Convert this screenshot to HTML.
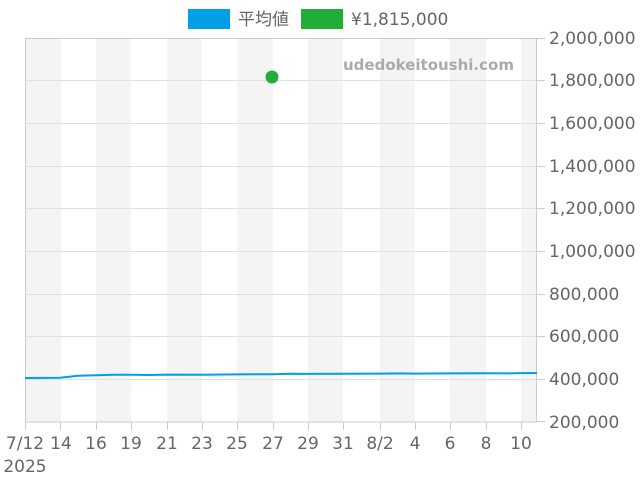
<!DOCTYPE html>
<html><head><meta charset="utf-8"><style>
body{margin:0;background:#fff;width:640px;height:480px;overflow:hidden}
svg text{font-family:"DejaVu Sans","Liberation Sans","Noto Sans CJK JP",sans-serif;fill:#666;font-size:17px}
</style></head><body>
<svg width="640" height="480" viewBox="0 0 640 480">
<rect x="188" y="9" width="42" height="20" fill="#009fe8"/>
<text x="238" y="25" style="font-family:'Noto Sans CJK JP',sans-serif">平均値</text>
<rect x="301" y="9" width="42" height="20" fill="#22ac38"/>
<text x="351" y="25">¥1,815,000</text>
<g fill="#f4f4f4">
<rect x="25" y="38" width="36" height="384"/><rect x="96" y="38" width="35" height="384"/>
<rect x="167" y="38" width="35" height="384"/><rect x="237" y="38" width="36" height="384"/>
<rect x="308" y="38" width="35" height="384"/><rect x="380" y="38" width="35" height="384"/>
<rect x="450" y="38" width="36" height="384"/><rect x="521" y="38" width="16" height="384"/>
</g>
<g stroke="#e0e0e0" stroke-width="1">
<line x1="25" x2="537" y1="80.5" y2="80.5"/><line x1="25" x2="537" y1="123.5" y2="123.5"/>
<line x1="25" x2="537" y1="166.5" y2="166.5"/><line x1="25" x2="537" y1="208.5" y2="208.5"/>
<line x1="25" x2="537" y1="251.5" y2="251.5"/><line x1="25" x2="537" y1="294.5" y2="294.5"/>
<line x1="25" x2="537" y1="336.5" y2="336.5"/><line x1="25" x2="537" y1="379.5" y2="379.5"/>
</g>
<rect x="25.5" y="38.5" width="511" height="383.5" fill="none" stroke="#ccc"/>
<g stroke="#ccc">
<line x1="537" x2="545" y1="38.5" y2="38.5"/><line x1="537" x2="545" y1="80.5" y2="80.5"/>
<line x1="537" x2="545" y1="123.5" y2="123.5"/><line x1="537" x2="545" y1="166.5" y2="166.5"/>
<line x1="537" x2="545" y1="208.5" y2="208.5"/><line x1="537" x2="545" y1="251.5" y2="251.5"/>
<line x1="537" x2="545" y1="294.5" y2="294.5"/><line x1="537" x2="545" y1="336.5" y2="336.5"/>
<line x1="537" x2="545" y1="379.5" y2="379.5"/><line x1="537" x2="545" y1="421.5" y2="421.5"/>
<line x1="25.5" x2="25.5" y1="422" y2="430"/><line x1="60.5" x2="60.5" y1="422" y2="430"/>
<line x1="96.5" x2="96.5" y1="422" y2="430"/><line x1="131.5" x2="131.5" y1="422" y2="430"/>
<line x1="167.5" x2="167.5" y1="422" y2="430"/><line x1="202.5" x2="202.5" y1="422" y2="430"/>
<line x1="237.5" x2="237.5" y1="422" y2="430"/><line x1="273.5" x2="273.5" y1="422" y2="430"/>
<line x1="308.5" x2="308.5" y1="422" y2="430"/><line x1="343.5" x2="343.5" y1="422" y2="430"/>
<line x1="380.5" x2="380.5" y1="422" y2="430"/><line x1="415.5" x2="415.5" y1="422" y2="430"/>
<line x1="450.5" x2="450.5" y1="422" y2="430"/><line x1="486.5" x2="486.5" y1="422" y2="430"/>
<line x1="521.5" x2="521.5" y1="422" y2="430"/>
</g>
<text x="343" y="70" style="font-weight:bold;fill:#aaa;font-size:15px">udedokeitoushi.com</text>
<polyline fill="none" stroke="#009fe8" stroke-width="2" points="25,378 60,377.7 78,375.7 96,375.3 114,374.7 131,374.7 150,375 167,374.6 202,374.7 237,374.4 273,374.2 290,373.8 308,373.9 343,373.7 380,373.6 400,373.4 415,373.6 450,373.4 486,373.3 505,373.4 521,373.1 537,373"/>
<circle cx="272" cy="77" r="6.5" fill="#22ac38"/>
<g>
<text x="549" y="44">2,000,000</text><text x="549" y="86">1,800,000</text>
<text x="549" y="129">1,600,000</text><text x="549" y="172">1,400,000</text>
<text x="549" y="214">1,200,000</text><text x="549" y="257">1,000,000</text>
<text x="549" y="300">800,000</text><text x="549" y="342">600,000</text>
<text x="549" y="385">400,000</text><text x="549" y="428">200,000</text>
</g>
<g text-anchor="middle">
<text x="25" y="449">7/12</text><text x="61" y="449">14</text><text x="96" y="449">16</text>
<text x="131" y="449">19</text><text x="167" y="449">21</text><text x="202" y="449">23</text>
<text x="237" y="449">25</text><text x="273" y="449">27</text><text x="308" y="449">29</text>
<text x="343" y="449">31</text><text x="380" y="449">8/2</text><text x="415" y="449">4</text>
<text x="450" y="449">6</text><text x="486" y="449">8</text><text x="521" y="449">10</text>
<text x="25" y="472">2025</text>
</g>
</svg>
</body></html>
